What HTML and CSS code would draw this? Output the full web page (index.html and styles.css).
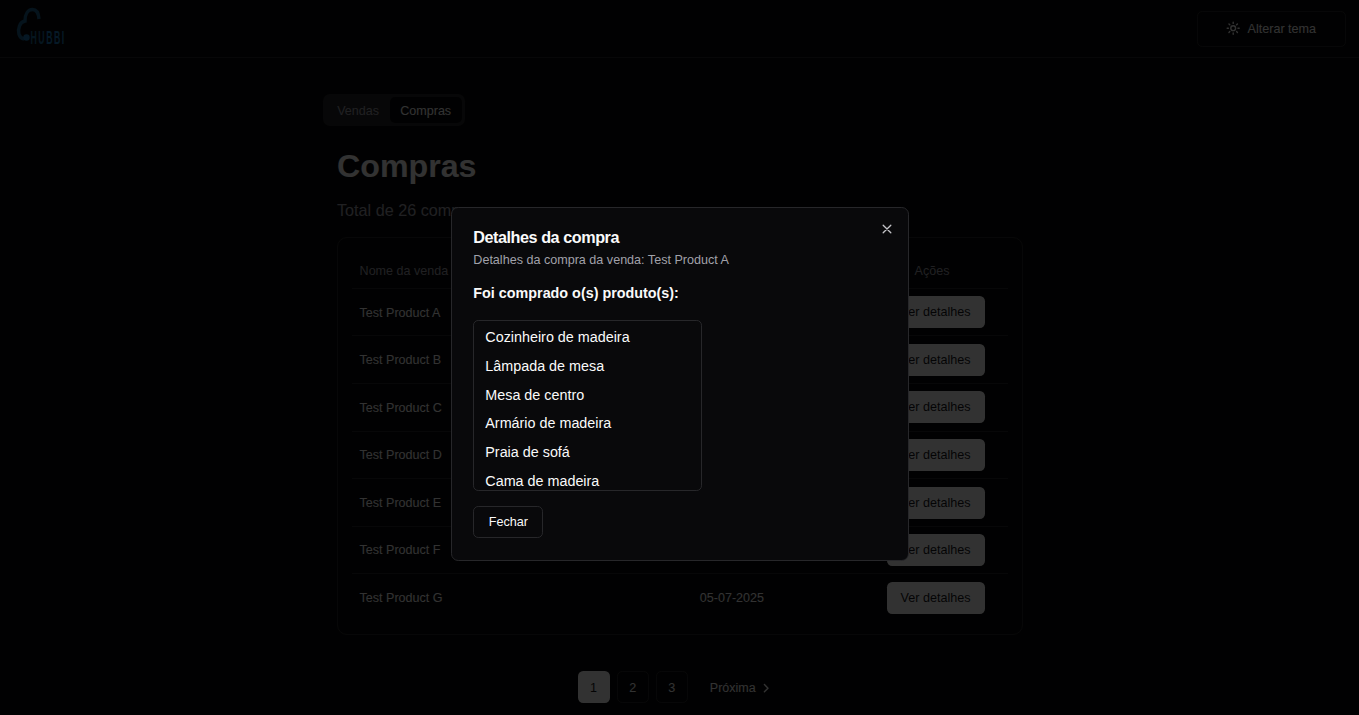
FILE: index.html
```html
<!DOCTYPE html>
<html lang="pt-BR">
<head>
<meta charset="utf-8">
<title>Compras</title>
<link rel="stylesheet" href="styles.css">
</head>
<body>
<div class="page">
  <header class="topbar">
    <svg class="logo" width="54" height="40" viewBox="0 0 54 40" fill="none">
      <path d="M8 32C2.500 31 1.500 24 3.500 19C4.500 16 6.500 14.500 9 14C9 7 12 2.500 16.500 2.500C20.500 2.500 22.500 6 23 12" stroke="#1b5f8c" stroke-width="3.4"/>
      <circle cx="10.500" cy="30.500" r="3.200" fill="#1c76b4"/>
      <text transform="translate(14.500 36.500) scale(.5 1)" class="logo-text">HU<tspan class="logo-accent">BBI</tspan></text>
    </svg>
    <button class="btn outline theme">
      <svg width="14.4" height="14.4" viewBox="0 0 24 24" fill="none" stroke="currentColor" stroke-width="2.3" stroke-linecap="round"><circle cx="12" cy="12" r="4"/><path d="M12 2v2M12 20v2M4.93 4.93l1.41 1.41M17.66 17.66l1.41 1.41M2 12h2M20 12h2M6.34 17.66l-1.41 1.41M19.07 4.93l-1.41 1.41"/></svg>
      Alterar tema
    </button>
  </header>
  <main class="content">
    <nav class="tabs"><span class="tab">Vendas</span><span class="tab active">Compras</span></nav>
    <h1>Compras</h1>
    <p class="total">Total de 26 compras</p>
    <section class="card">
      <div class="row head"><span>Nome da venda</span><span class="center">Data</span><span class="actions-title">Ações</span></div>
      <div class="row"><span>Test Product A</span><span class="center">05-07-2025</span><span class="action"><button class="btn solid">Ver detalhes</button></span></div>
      <div class="row"><span>Test Product B</span><span class="center">05-07-2025</span><span class="action"><button class="btn solid">Ver detalhes</button></span></div>
      <div class="row"><span>Test Product C</span><span class="center">05-07-2025</span><span class="action"><button class="btn solid">Ver detalhes</button></span></div>
      <div class="row"><span>Test Product D</span><span class="center">05-07-2025</span><span class="action"><button class="btn solid">Ver detalhes</button></span></div>
      <div class="row"><span>Test Product E</span><span class="center">05-07-2025</span><span class="action"><button class="btn solid">Ver detalhes</button></span></div>
      <div class="row"><span>Test Product F</span><span class="center">05-07-2025</span><span class="action"><button class="btn solid">Ver detalhes</button></span></div>
      <div class="row"><span>Test Product G</span><span class="center">05-07-2025</span><span class="action"><button class="btn solid">Ver detalhes</button></span></div>
    </section>
    <nav class="pagination">
      <button class="btn num solid">1</button>
      <button class="btn num outline">2</button>
      <button class="btn num outline">3</button>
      <span class="next">Próxima
        <svg width="14.4" height="14.4" viewBox="0 0 24 24" fill="none" stroke="currentColor" stroke-width="2.4" stroke-linecap="round" stroke-linejoin="round"><path d="m9 18 6-6-6-6"/></svg>
      </span>
    </nav>
  </main>
</div>
<div class="overlay">
  <div class="dialog" role="dialog">
    <h2>Detalhes da compra</h2>
    <p class="description">Detalhes da compra da venda: Test Product A</p>
    <h3>Foi comprado o(s) produto(s):</h3>
    <ul class="products">
      <li>Cozinheiro de madeira</li>
      <li>Lâmpada de mesa</li>
      <li>Mesa de centro</li>
      <li>Armário de madeira</li>
      <li>Praia de sofá</li>
      <li>Cama de madeira</li>
    </ul>
    <button class="btn outline close">Fechar</button>
    <svg class="dismiss" width="14" height="14" viewBox="0 0 15 15" fill="none" stroke="currentColor" stroke-width="1.4" stroke-linecap="round"><path d="M3.4 3.4l8.2 8.2M11.6 3.4l-8.2 8.2"/></svg>
  </div>
</div>
</body>
</html>
```
FILE: styles.css
```css
* { box-sizing: border-box; margin: 0; padding: 0; }
html { font-size: 14.4px; }
body {
  height: 715px;
  overflow: hidden;
  background: #09090b;
  color: #fafafa;
  font-family: "Liberation Sans", Arial, sans-serif;
}
.page { height: 715px; overflow: hidden; }
.topbar {
  display: flex;
  justify-content: space-between;
  align-items: center;
  height: 58px;
  padding: 0 13px 0 16px;
  border-bottom: 1px solid #27272a;
}
.logo { margin-bottom: 4px; }
.logo-text { font: bold 17.5px "Liberation Sans", Arial, sans-serif; letter-spacing: 3px; fill: #1c6c9c; }
.logo-accent { fill: #1c7fc0; }
.btn {
  display: inline-flex;
  align-items: center;
  justify-content: center;
  border: 0;
  border-radius: 5.2px;
  height: 32.4px;
  padding: 0 14.4px;
  font: 12.6px/18px "Liberation Sans", Arial, sans-serif;
  color: #fafafa;
  background: none;
}
.outline { border: 1px solid #27272a; }
.solid { background: #fafafa; color: #18181b; }
.theme { width: 149px; height: 36px; padding: 0 15px 0 14px; gap: 7.2px; }
.content { width: 686px; margin: 36px 0 0 337px; }
.tabs {
  display: flex;
  align-items: center;
  width: 142px;
  height: 32px;
  margin-left: -14px;
  padding: 3.6px;
  border-radius: 7.2px;
  background: #27272a;
}
.tab {
  height: 25.2px;
  padding: 4.2px 10.6px 3px;
  border-radius: 5px;
  color: #a1a1aa;
  font-size: 12.55px;
  line-height: 18px;
}
.active { background: #09090b; color: #fafafa; }
h1 { margin-top: 22.4px; font-size: 32.2px; line-height: 36px; }
.total { margin-top: 13.6px; color: #a1a1aa; font-size: 16.2px; line-height: 25px; }
.card {
  height: 398px;
  margin-top: 14px;
  padding: 14.4px;
  border: 1px solid #27272a;
  border-radius: 10px;
}
.row {
  display: grid;
  grid-template-columns: 248px 263px 1fr;
  align-items: center;
  height: 47.55px;
  border-bottom: 1px solid #27272a;
  font-size: 12.55px;
}
.row > span { padding-top: 1px; }
.row > span:first-child { padding-left: 7.2px; }
.row:last-child { border-bottom: 0; }
.head { height: 36.5px; color: #a1a1aa; }
.center { text-align: center; }
.row > .action { display: flex; justify-content: center; padding-top: .4px; }
.action .btn { width: 98px; height: 32px; padding: 0; }
.actions-title { padding-right: 7px; text-align: center; }
.pagination { display: flex; gap: 7.2px; padding-left: 240.5px; margin-top: 36px; }
.num { width: 32px; height: 32px; padding: 2px 0 0; }
.next { display: flex; align-items: center; gap: 3.2px; padding: 2px 0 0 14.8px; font-size: 12.5px; }
.overlay {
  position: fixed;
  inset: 0;
  display: flex;
  align-items: flex-start;
  justify-content: center;
  padding-top: 207px;
  background: rgba(0, 0, 0, .8);
}
.dialog {
  position: relative;
  width: 458px;
  height: 354px;
  margin-left: 1px;
  padding: 20.6px 21.3px;
  border: 1px solid #27272a;
  border-radius: 7.2px;
  background: #09090b;
}
h2 { font-size: 16.2px; line-height: 16.2px; letter-spacing: -.028em; }
.description { margin-top: 6px; color: #a1a1aa; font-size: 12.58px; line-height: 18px; }
h3 { margin-top: 13.8px; font-size: 14.35px; line-height: 21.6px; }
.products {
  width: 229px;
  height: 171px;
  margin-top: 15.8px;
  padding: 2.2px 11px;
  overflow: hidden;
  border: 1px solid #27272a;
  border-radius: 5.2px;
  list-style: none;
  font-size: 14.35px;
}
.products li { height: 28.75px; line-height: 28.75px; white-space: nowrap; }
.close { width: 70px; height: 32px; margin-top: 15px; }
.dismiss { position: absolute; top: 14px; right: 14px; color: #c4c4c8; }
```
